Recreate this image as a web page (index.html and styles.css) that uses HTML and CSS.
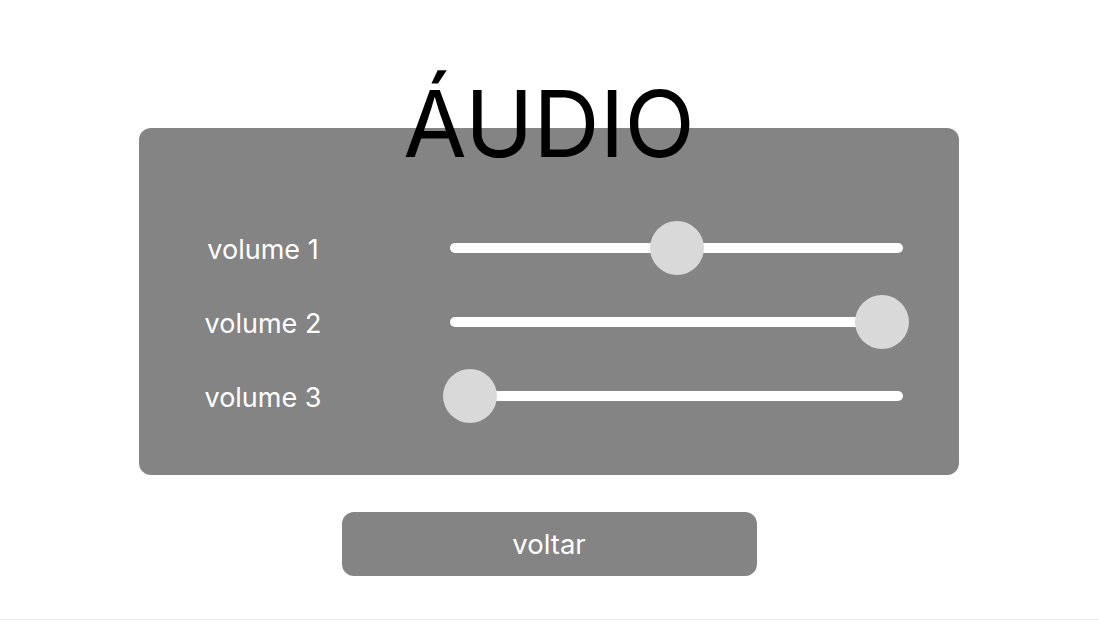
FILE: index.html
```html
<!DOCTYPE html>
<html lang="pt">

<head>
	<meta charset="UTF-8">
	<title>Áudio</title>
	<link rel="stylesheet" href="styles.css">
</head>

<body>
	<div class="page">
		<h1 class="title">ÁUDIO</h1>
		<div class="panel">
			<div class="row">
				<span class="label">volume 1</span>
				<div class="track"><span class="thumb" style="left: 50%"></span></div>
			</div>
			<div class="row">
				<span class="label">volume 2</span>
				<div class="track"><span class="thumb" style="left: 95.4%"></span></div>
			</div>
			<div class="row">
				<span class="label">volume 3</span>
				<div class="track"><span class="thumb" style="left: 4.5%"></span></div>
			</div>
		</div>
		<button class="back" type="button">voltar</button>
	</div>
</body>

</html>
```

FILE: styles.css
```css
body {
	margin: 0;
	background: #fff;
	font-family: Inter, 'Liberation Sans', sans-serif;
}

.page {
	height: 620px;
	border-bottom: 1px solid #eeeeee;
	display: flex;
	flex-direction: column;
	align-items: center;
	padding: 78px 1px 0 0;
	box-sizing: border-box;
}

.title {
	margin: 0;
	font-size: 92px;
	line-height: 92px;
	font-weight: 400;
	color: #000;
	position: relative;
	z-index: 1;
}

.panel {
	width: 820px;
	height: 347px;
	margin-top: -42px;
	box-sizing: border-box;
	padding: 83px 56px 0 0;
	background: #848484;
	border-radius: 12px;
}

.row {
	display: grid;
	grid-template-columns: 248px 1fr;
	column-gap: 63px;
	align-items: center;
	height: 74px;
}

.label {
	text-align: center;
	color: #fff;
	font-size: 27px;
	line-height: 32px;
	padding-top: 3px;
}

.track {
	position: relative;
	height: 10px;
	border-radius: 5px;
	background: #fff;
}

.thumb {
	position: absolute;
	top: 50%;
	width: 54px;
	height: 54px;
	border-radius: 50%;
	background: #d9d9d9;
	transform: translate(-50%, -50%);
}

.back {
	margin-top: 37px;
	width: 415px;
	height: 64px;
	border: none;
	border-radius: 12px;
	background: #848484;
	color: #fff;
	font: 27.5px Inter, 'Liberation Sans', sans-serif;
}
```
